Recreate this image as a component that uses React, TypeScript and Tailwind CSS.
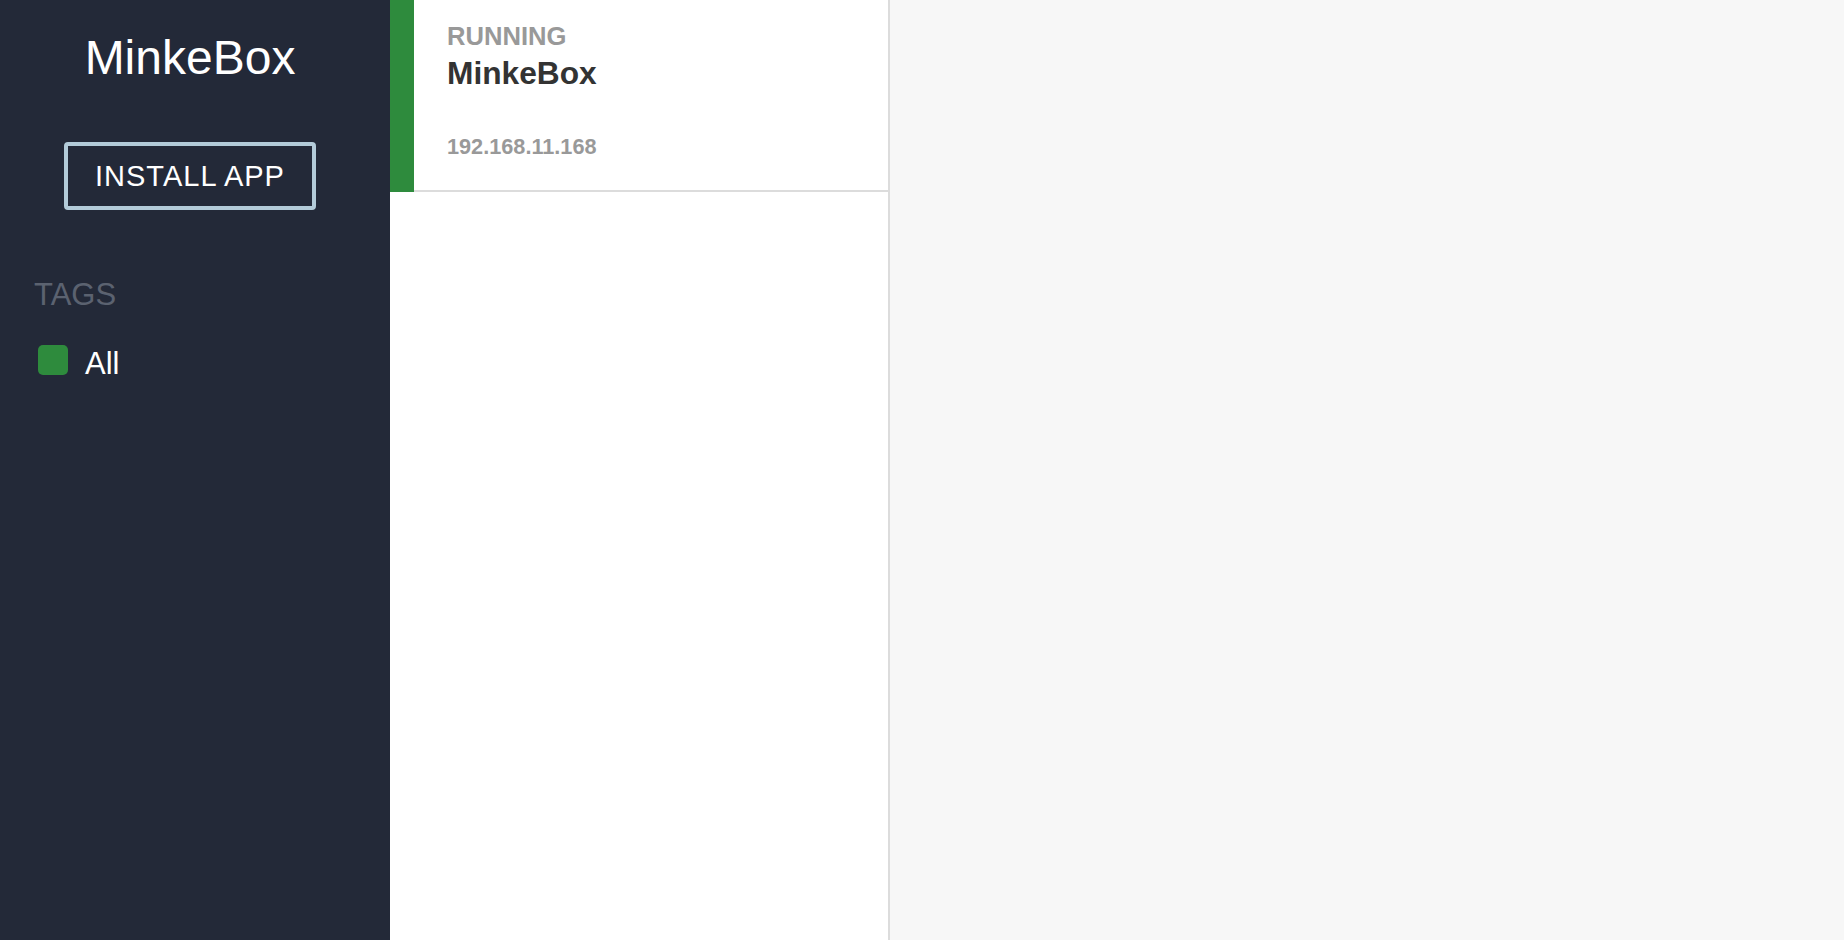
const FONT = { fontFamily: '"Liberation Sans", Arial, Helvetica, sans-serif' };

type Box = { id: string; status: string; name: string; ip: string };

const BOXES: Box[] = [{ id: "minkebox", status: "RUNNING", name: "MinkeBox", ip: "192.168.11.168" }];

const TAGS = [{ name: "All", color: "bg-[#2e8b3d]" }];

export default function App() {
  return (
    <div className="flex h-screen w-full overflow-hidden" style={FONT}>
      {/* sidebar */}
      <aside className="w-[390px] shrink-0 bg-[#232938] flex flex-col">
        <div className="pr-[10px]">
          <h1 className="text-center text-white text-[48px] leading-[48px] mt-[34px]">MinkeBox</h1>
          <div className="flex justify-center mt-[60px]">
            <button className="w-[252px] h-[68px] border-[4px] border-[#b3cbd9] rounded-[4px] text-white text-[29px] leading-none tracking-[1px]">
              INSTALL APP
            </button>
          </div>
        </div>
        <div className="mt-[69px] pl-[34px] text-[31px] leading-[31px] text-[#5b6270]">TAGS</div>
        <ul className="mt-[30px] pl-[38px]">
          {TAGS.map((t) => (
            <li key={t.name} className="flex items-center gap-[17px]">
              <span className={`w-[30px] h-[30px] rounded-[5px] ${t.color}`} />
              <span className="text-white text-[31px] leading-[31px] mt-[8px]">{t.name}</span>
            </li>
          ))}
        </ul>
      </aside>

      {/* box list */}
      <section className="w-[500px] shrink-0 bg-white border-r-2 border-[#dcdcdc]">
        {BOXES.map((b) => (
          <div key={b.id} className="flex h-[192px]">
            <div className="w-[24px] shrink-0 bg-[#2e8b3d]" />
            <div className="flex-1 border-b-2 border-[#dcdcdc] pl-[33px] pt-[23px]">
              <div className="text-[25.6px] leading-[26px] font-bold text-[#999999]">{b.status}</div>
              <div className="mt-[8px] text-[31.7px] leading-[32px] font-bold text-[#333333]">{b.name}</div>
              <div className="mt-[47px] text-[21.7px] leading-[22px] font-bold text-[#999999]">{b.ip}</div>
            </div>
          </div>
        ))}
      </section>

      {/* detail */}
      <main className="flex-1 bg-[#f7f7f7]" />
    </div>
  );
}
